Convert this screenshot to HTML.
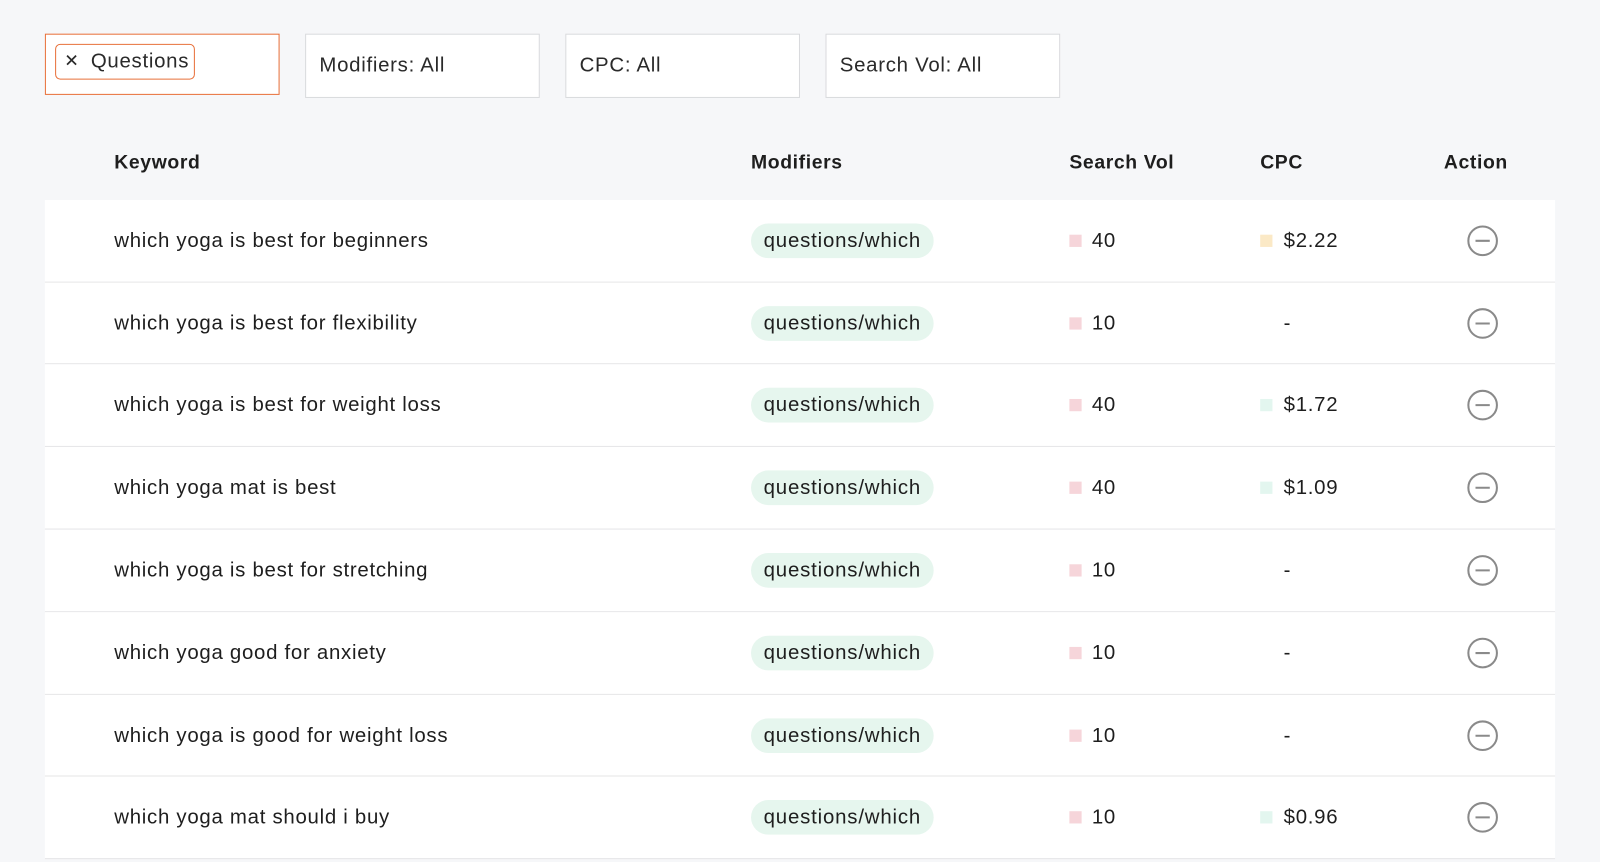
<!DOCTYPE html>
<html><head><style>
*{margin:0;padding:0;box-sizing:border-box}
body{width:1600px;height:862px;background:#f6f7f9;font-family:"Liberation Sans",sans-serif;color:#1e1e1e;overflow:hidden}
#w{position:relative;width:1568px;height:845px;transform:scale(1.0204);transform-origin:0 0;letter-spacing:0.7px}
.f{position:absolute;top:33px;height:63px;width:230px;background:#fff;border:1px solid #d9dadd;font-size:20px;padding-left:13px;line-height:61px;color:#2a2a2a}
.chip{position:absolute;left:9px;top:9px;width:137px;height:35px;border:1.5px solid #e8703a;border-radius:5px;font-size:20px;line-height:32px;padding-left:34px}
.chip b{position:absolute;left:8px;top:0;font-weight:normal;font-size:17px}
.h{position:absolute;top:148px;font-size:19px;font-weight:bold;letter-spacing:0.6px;line-height:24px}
.row{position:absolute;left:44px;width:1480px;height:81px;background:#fff;border-bottom:1px solid #e4e4e6}
.row span{position:absolute;font-size:20px;line-height:24px}
.k{left:68px;top:28px}
.p{left:692px;top:23px;width:179px;height:34px;background:#e6f6ee;border-radius:17px;text-align:center;line-height:34px!important;letter-spacing:0.8px}
.sq{position:absolute;width:12px;height:12px;top:34px}
.v{left:1026px;top:28px}
.c{left:1214px;top:28px}
.d{left:1214px;top:28px}
svg{position:absolute;left:1393px;top:24px}
</style></head><body><div id="w">
<div class="f" style="left:44px;height:60px;border:1.5px solid #e8703a"><div class="chip"><b>✕</b>Questions</div></div>
<div class="f" style="left:299px">Modifiers: All</div>
<div class="f" style="left:554px">CPC: All</div>
<div class="f" style="left:809px">Search Vol: All</div>
<div class="h" style="left:112px">Keyword</div>
<div class="h" style="left:736px">Modifiers</div>
<div class="h" style="left:1048px">Search Vol</div>
<div class="h" style="left:1235px">CPC</div>
<div class="h" style="left:1415px">Action</div>

<div class="row" style="top:196px;height:81px"><span class="k">which yoga is best for beginners</span><span class="p">questions/which</span><i class="sq" style="left:1004px;background:#f6d5da"></i><span class="v">40</span><i class="sq" style="left:1191px;background:#fbe9c6"></i><span class="c">$2.22</span><svg width="32" height="32"><circle cx="16" cy="16" r="14" fill="none" stroke="#8a8a8a" stroke-width="2"/><line x1="9" y1="16" x2="23" y2="16" stroke="#8a8a8a" stroke-width="2"/></svg></div>
<div class="row" style="top:277px;height:80px"><span class="k">which yoga is best for flexibility</span><span class="p">questions/which</span><i class="sq" style="left:1004px;background:#f6d5da"></i><span class="v">10</span><span class="d">-</span><svg width="32" height="32"><circle cx="16" cy="16" r="14" fill="none" stroke="#8a8a8a" stroke-width="2"/><line x1="9" y1="16" x2="23" y2="16" stroke="#8a8a8a" stroke-width="2"/></svg></div>
<div class="row" style="top:357px;height:81px"><span class="k">which yoga is best for weight loss</span><span class="p">questions/which</span><i class="sq" style="left:1004px;background:#f6d5da"></i><span class="v">40</span><i class="sq" style="left:1191px;background:#e3f6ef"></i><span class="c">$1.72</span><svg width="32" height="32"><circle cx="16" cy="16" r="14" fill="none" stroke="#8a8a8a" stroke-width="2"/><line x1="9" y1="16" x2="23" y2="16" stroke="#8a8a8a" stroke-width="2"/></svg></div>
<div class="row" style="top:438px;height:81px"><span class="k">which yoga mat is best</span><span class="p">questions/which</span><i class="sq" style="left:1004px;background:#f6d5da"></i><span class="v">40</span><i class="sq" style="left:1191px;background:#e3f6ef"></i><span class="c">$1.09</span><svg width="32" height="32"><circle cx="16" cy="16" r="14" fill="none" stroke="#8a8a8a" stroke-width="2"/><line x1="9" y1="16" x2="23" y2="16" stroke="#8a8a8a" stroke-width="2"/></svg></div>
<div class="row" style="top:519px;height:81px"><span class="k">which yoga is best for stretching</span><span class="p">questions/which</span><i class="sq" style="left:1004px;background:#f6d5da"></i><span class="v">10</span><span class="d">-</span><svg width="32" height="32"><circle cx="16" cy="16" r="14" fill="none" stroke="#8a8a8a" stroke-width="2"/><line x1="9" y1="16" x2="23" y2="16" stroke="#8a8a8a" stroke-width="2"/></svg></div>
<div class="row" style="top:600px;height:81px"><span class="k">which yoga good for anxiety</span><span class="p">questions/which</span><i class="sq" style="left:1004px;background:#f6d5da"></i><span class="v">10</span><span class="d">-</span><svg width="32" height="32"><circle cx="16" cy="16" r="14" fill="none" stroke="#8a8a8a" stroke-width="2"/><line x1="9" y1="16" x2="23" y2="16" stroke="#8a8a8a" stroke-width="2"/></svg></div>
<div class="row" style="top:681px;height:80px"><span class="k">which yoga is good for weight loss</span><span class="p">questions/which</span><i class="sq" style="left:1004px;background:#f6d5da"></i><span class="v">10</span><span class="d">-</span><svg width="32" height="32"><circle cx="16" cy="16" r="14" fill="none" stroke="#8a8a8a" stroke-width="2"/><line x1="9" y1="16" x2="23" y2="16" stroke="#8a8a8a" stroke-width="2"/></svg></div>
<div class="row" style="top:761px;height:81px"><span class="k">which yoga mat should i buy</span><span class="p">questions/which</span><i class="sq" style="left:1004px;background:#f6d5da"></i><span class="v">10</span><i class="sq" style="left:1191px;background:#e3f6ef"></i><span class="c">$0.96</span><svg width="32" height="32"><circle cx="16" cy="16" r="14" fill="none" stroke="#8a8a8a" stroke-width="2"/><line x1="9" y1="16" x2="23" y2="16" stroke="#8a8a8a" stroke-width="2"/></svg></div>
</div></body></html>
